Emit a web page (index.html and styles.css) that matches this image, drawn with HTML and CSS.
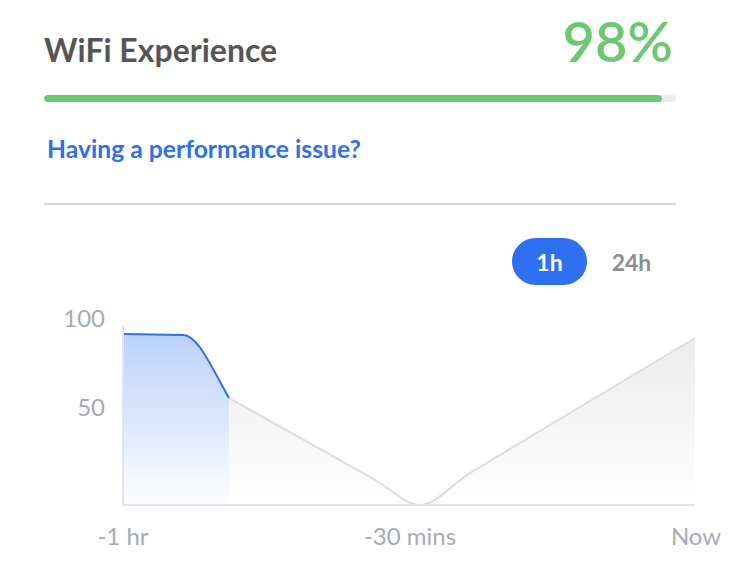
FILE: index.html
```html
<!DOCTYPE html>
<html lang="en">
<head>
<meta charset="utf-8">
<title>WiFi Experience</title>
<link rel="stylesheet" href="styles.css">
</head>
<body>
<div class="card">
  <div class="summary">
    <div class="header">
      <h1 class="title">WiFi Experience</h1>
      <div class="score">98%</div>
    </div>
    <div class="progress"><div class="progress-fill" style="width: 97.8%"></div></div>
    <a class="issue-link" href="#">Having a performance issue?</a>
    <div class="divider"></div>
    <div class="range-toggle">
      <button class="range-btn active">1h</button>
      <button class="range-btn">24h</button>
    </div>
  </div>
  <div class="chart">
    <svg class="chart-svg" width="736" height="265" viewBox="0 295 736 265" xmlns="http://www.w3.org/2000/svg">
      <defs>
        <linearGradient id="blueFill" x1="0" y1="0" x2="0" y2="1">
          <stop offset="0" stop-color="#2d6ff0" stop-opacity="0.32"/>
          <stop offset="1" stop-color="#2d6ff0" stop-opacity="0.01"/>
        </linearGradient>
        <linearGradient id="grayFill" x1="0" y1="0" x2="0" y2="1">
          <stop offset="0" stop-color="#ececee" stop-opacity="1"/>
          <stop offset="1" stop-color="#ffffff" stop-opacity="1"/>
        </linearGradient>
      </defs>
      <text class="tick" x="105" y="327" text-anchor="end">100</text>
      <text class="tick" x="105" y="416" text-anchor="end">50</text>

      <path d="M123,334 L183,335 C197,335 209,362 229,398 L229,505 L123,505 Z" fill="url(#blueFill)"/>
      <path d="M229,398 L370,477 C395,491 405,505 420,505 C435,505 445,490 470,473 L695,338 L695,505 L229,505 Z" fill="url(#grayFill)"/>
      <path d="M229,398 L370,477 C395,491 405,505 420,505 C435,505 445,490 470,473 L695,338" fill="none" stroke="#dcdcde" stroke-width="2"/>
      <path d="M123,334 L183,335 C197,335 209,362 229,398" fill="none" stroke="#2d6ff0" stroke-width="2"/>

      <line x1="123" y1="326" x2="123" y2="506" stroke="#e3e3e9" stroke-width="2"/>
      <line x1="122" y1="505" x2="695" y2="505" stroke="#e3e3e9" stroke-width="2"/>

      <text class="tick" x="123" y="545" text-anchor="middle">-1 hr</text>
      <text class="tick" x="410" y="545" text-anchor="middle">-30 mins</text>
      <text class="tick" x="696" y="545" text-anchor="middle">Now</text>
    </svg>
  </div>
</div>
</body>
</html>
```

FILE: styles.css
```css
html, body {
  margin: 0;
  padding: 0;
  background: #ffffff;
}

body {
  font-family: Lato, "Open Sans", "Liberation Sans", sans-serif;
}

.card {
  padding-top: 13px;
}

.summary {
  margin-left: 44px;
  width: 632px;
}

.header {
  display: flex;
  justify-content: space-between;
  align-items: baseline;
}

.title {
  margin: 0;
  font-size: 32px;
  line-height: 1;
  font-weight: 700;
  color: #555555;
}

.score {
  font-size: 56px;
  line-height: 1;
  font-weight: 600;
  color: #6cc96f;
  margin-right: 3px;
}

.progress {
  margin-top: 26px;
  height: 7px;
  border-radius: 4px;
  background: #ececec;
  overflow: hidden;
}

.progress-fill {
  height: 100%;
  border-radius: 4px;
  background: #6bc96f;
}

.issue-link {
  display: block;
  margin-top: 35px;
  margin-left: 3px;
  font-size: 24.7px;
  line-height: 24px;
  font-weight: 700;
  color: #2f6ff0;
  text-decoration: none;
}

.divider {
  margin-top: 42px;
  height: 2px;
  background: #d6d8de;
}

.range-toggle {
  display: flex;
  justify-content: flex-end;
  gap: 7px;
  margin-top: 33px;
  margin-right: 7px;
}

.range-btn {
  width: 75px;
  height: 47px;
  border: none;
  border-radius: 24px;
  background: transparent;
  font-family: Lato, "Open Sans", "Liberation Sans", sans-serif;
  font-size: 23px;
  font-weight: 700;
  color: #8e8e8e;
  padding: 0;
}

.range-btn.active {
  background: #2f6ff2;
  color: #ffffff;
}

.chart {
  margin-top: 10px;
}

.chart-svg {
  display: block;
}

.tick {
  font-family: Lato, "Open Sans", "Liberation Sans", sans-serif;
  font-size: 24px;
  fill: #a8aab6;
}
```
